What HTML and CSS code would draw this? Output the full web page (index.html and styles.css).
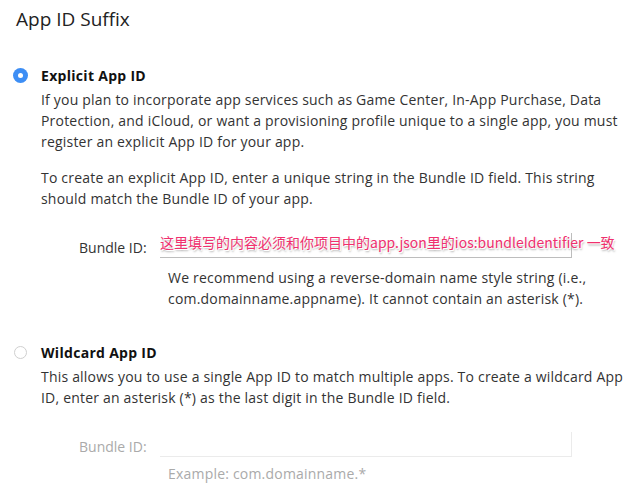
FILE: index.html
```html
<!DOCTYPE html>
<html>
<head>
<meta charset="utf-8">
<link rel="stylesheet" href="styles.css">
</head>
<body>
<div class="page">
  <h2 class="title">App ID Suffix</h2>

  <section class="option">
    <div class="option-head">
      <span class="radio-box"><span class="radio radio-on"></span></span>
      <span class="option-name">Explicit App ID</span>
    </div>
    <div class="option-body">
      <p class="desc">If you plan to incorporate app services such as Game Center, In-App Purchase, Data Protection, and iCloud, or want a provisioning profile unique to a single app, you must register an explicit App ID for your app.</p>
      <p class="desc">To create an explicit App ID, enter a unique string in the Bundle ID field. This string should match the Bundle ID of your app.</p>
    </div>
    <div class="field">
      <label class="field-label">Bundle ID:</label>
      <div class="input-wrap">
        <div class="input"></div>
        <span class="note">这里填写的内容必须和你项目中的<span class="note-latin">app.json</span>里的<span class="note-latin">ios:bundleIdentifier </span>一致</span>
      </div>
    </div>
    <p class="help">We recommend using a reverse-domain name style string (i.e., com.domainname.appname). It cannot contain an asterisk (*).</p>
  </section>

  <section class="option option-second">
    <div class="option-head">
      <span class="radio-box"><span class="radio"></span></span>
      <span class="option-name">Wildcard App ID</span>
    </div>
    <div class="option-body">
      <p class="desc">This allows you to use a single App ID to match multiple apps. To create a wildcard App ID, enter an asterisk (*) as the last digit in the Bundle ID field.</p>
    </div>
    <div class="field field-disabled">
      <label class="field-label">Bundle ID:</label>
      <div class="input-wrap">
        <div class="input"></div>
      </div>
    </div>
    <p class="help help-disabled">Example: com.domainname.*</p>
  </section>
</div>
</body>
</html>
```

FILE: styles.css
```css
html, body {
  margin: 0;
  padding: 0;
  background: #fff;
}

body {
  font-family: "Open Sans", "Lato", sans-serif;
  color: #333;
  font-size: 14px;
}

.page {
  width: 642px;
  height: 490px;
  overflow: hidden;
}

.title {
  margin: 7px 0 0 16px;
  font-size: 19px;
  line-height: 24px;
  font-weight: normal;
  color: #222;
}

.option {
  margin-top: 34px;
}

.option-second {
  margin-top: 33px;
}

.option-head {
  display: flex;
  align-items: center;
  gap: 13px;
  padding-left: 13px;
  height: 20px;
}

.radio-box {
  width: 15px;
  height: 15px;
  flex: none;
  display: flex;
  align-items: center;
  justify-content: center;
}

.radio {
  width: 13px;
  height: 13px;
  border-radius: 50%;
  border: 1px solid #cfcfcf;
  box-sizing: border-box;
  background: #fff;
  display: flex;
  align-items: center;
  justify-content: center;
}

.radio-on {
  width: 15px;
  height: 15px;
  border: none;
  background: #3d8ef5;
}

.radio-on::after {
  content: "";
  width: 5px;
  height: 5px;
  border-radius: 50%;
  background: #fff;
}

.option-name {
  font-weight: bold;
  font-size: 14px;
  letter-spacing: 0.3px;
  color: #111;
}

.option-body {
  padding-left: 41px;
  width: 590px;
}

.desc {
  margin: 4px 0 15px;
  line-height: 21px;
  font-size: 14px;
  letter-spacing: 0.2px;
  color: #333;
}

.field {
  display: flex;
  align-items: flex-end;
  margin-top: 24px;
}

.field-label {
  flex: none;
  width: 81px;
  padding-left: 79px;
  line-height: 21px;
  font-size: 14px;
  color: #333;
}

.input-wrap {
  position: relative;
  width: 412px;
}

.input {
  height: 24px;
  border-right: 1px solid #bdbdbd;
  border-bottom: 1px solid #bdbdbd;
}

.note {
  position: absolute;
  left: 0;
  top: -1px;
  white-space: nowrap;
  font-family: "Noto Sans CJK SC", "Noto Sans", sans-serif;
  font-size: 14px;
  line-height: 20px;
  color: #f0306e;
  text-shadow: 0 0 2px #fff, 1px 1px 0 #fff, 1px 2px 2px rgba(0,0,0,0.35);
}

.help {
  margin: 9px 0 0 168px;
  width: 460px;
  line-height: 21px;
  font-size: 14px;
  letter-spacing: 0.2px;
  color: #333;
}

.field-disabled {
  margin-top: 24px;
}

.field-disabled .field-label {
  color: #aaa;
}

.field-disabled .input {
  border-color: #ebebeb;
}

.help-disabled {
  color: #aaa;
  margin-top: 6px;
}
```
